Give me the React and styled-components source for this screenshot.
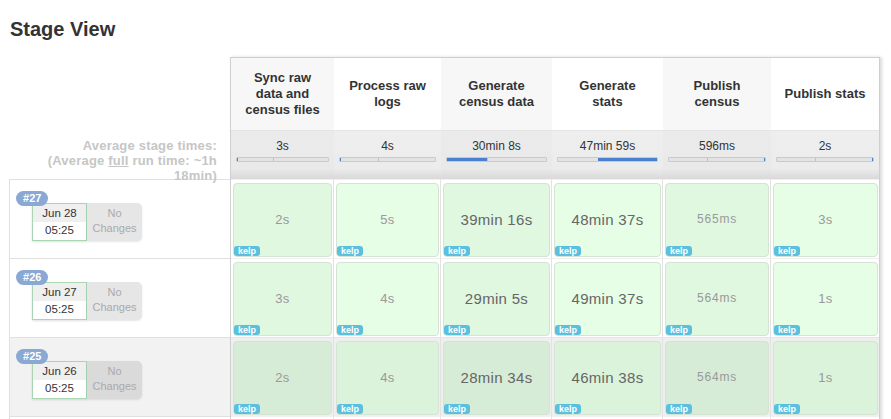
import React from 'react';
import styled, { createGlobalStyle } from 'styled-components';

const GlobalStyle = createGlobalStyle`
  html, body {
    margin: 0;
    padding: 0;
    background: #fff;
  }
  body {
    font-family: "Liberation Sans", Arial, sans-serif;
    color: #333;
  }
`;

const STAGES = [
  { name: 'Sync raw data and census files', avg: '3s', from: 0, to: 1 },
  { name: 'Process raw logs', avg: '4s', from: 0, to: 1 },
  { name: 'Generate census data', avg: '30min 8s', from: 0, to: 40 },
  { name: 'Generate stats', avg: '47min 59s', from: 40, to: 100 },
  { name: 'Publish census', avg: '596ms', from: 99, to: 100 },
  { name: 'Publish stats', avg: '2s', from: 99, to: 100 },
];

const BUILDS = [
  { id: 27, date: 'Jun 28', time: '05:25', times: ['2s', '5s', '39min 16s', '48min 37s', '565ms', '3s'] },
  { id: 26, date: 'Jun 27', time: '05:25', times: ['3s', '4s', '29min 5s', '49min 37s', '564ms', '1s'] },
  { id: 25, date: 'Jun 26', time: '05:25', times: ['2s', '4s', '28min 34s', '46min 38s', '564ms', '1s'], highlighted: true },
  { id: 24, date: 'Jun 25', time: '05:25', times: ['2s', '4s', '31min 2s', '47min 11s', '571ms', '2s'] },
];

const COLUMN_WIDTHS = '103px 107px 111px 111px 108px 108px';

const Page = styled.div`
  padding: 17px 0 0 9px;
`;

const Title = styled.h2`
  margin: 0 0 16px 1px;
  font-size: 20px;
  line-height: 24px;
  font-weight: bold;
  color: #333;
`;

const Board = styled.div`
  display: flex;
  align-items: flex-start;
`;

const LeftCol = styled.div`
  width: 221px;
  display: flex;
  flex-direction: column;
`;

const HeaderSpacer = styled.div`
  height: 73px;
`;

const AvgLabel = styled.div`
  height: 49px;
  box-sizing: border-box;
  padding: 8px 13px 0 20px;
  text-align: right;
  font-size: 13px;
  letter-spacing: 0.2px;
  line-height: 15px;
  font-weight: bold;
  color: #c6c6c6;
  position: relative;
  z-index: 1;

  u {
    text-decoration: underline;
  }
`;

const BuildRow = styled.div`
  height: 79px;
  box-sizing: border-box;
  border-top: 1px solid #e0e0e0;
  border-left: 1px solid #e0e0e0;
  background: ${p => (p.$highlighted ? '#f2f2f2' : '#fff')};
  padding: 8px 0 0 6px;
`;

const BuildBadge = styled.span`
  display: inline-block;
  position: relative;
  z-index: 1;
  height: 15px;
  line-height: 15px;
  padding: 0 7px;
  border-radius: 8px;
  background: #8aa8d4;
  color: #fff;
  font-size: 11px;
  font-weight: bold;
`;

const BuildInfo = styled.div`
  display: flex;
  margin: -3px 0 0 16px;
`;

const DateBox = styled.div`
  width: 55px;
  box-sizing: border-box;
  border: 1px solid #a9d5b5;
  background: #fff;
  box-shadow: 0 1px 2px rgba(0, 0, 0, 0.12);
  font-size: 11.5px;
  color: #333;
  text-align: center;
`;

const DatePart = styled.div`
  height: ${p => (p.$top ? 18 : 17)}px;
  line-height: ${p => (p.$top ? 18 : 17)}px;
  background: ${p => (p.$top ? '#efefef' : '#fff')};
`;

const NoChanges = styled.div`
  width: 55px;
  height: 38px;
  box-sizing: border-box;
  padding-top: 3px;
  background: ${p => (p.$highlighted ? '#dadada' : '#e6e6e6')};
  border-radius: 0 5px 5px 0;
  box-shadow: 0 1px 2px rgba(0, 0, 0, 0.1);
  color: #aaa;
  font-size: 11px;
  line-height: 15px;
  text-align: center;
`;

const StageTable = styled.div`
  display: grid;
  grid-template-columns: ${COLUMN_WIDTHS};
  grid-template-rows: 72px 49px repeat(${BUILDS.length}, 79px);
  border: 1px solid #cfcfcf;
  border-bottom: none;
  box-shadow: 2px 0 3px rgba(0, 0, 0, 0.14);
`;

const StageHead = styled.div`
  display: flex;
  align-items: center;
  justify-content: center;
  padding: 0 12px;
  text-align: center;
  background: ${p => (p.$odd ? '#f7f7f7' : '#fff')};
  font-size: 13px;
  line-height: 16px;
  font-weight: bold;
  color: #333;
`;

const AvgSlot = styled.div`
  padding: 8px 5px 0;
  background: linear-gradient(
    to bottom,
    ${p => (p.$odd ? '#ebebeb' : '#eeeeee')} 0,
    ${p => (p.$odd ? '#e9e9e9' : '#ececec')} 78%,
    #d9d9d9 100%
  );
  border-top: 1px solid #e4e4e4;
  text-align: center;
  font-size: 12px;
  line-height: 14px;
  color: #333;
`;

const Bar = styled.div`
  position: relative;
  height: 5px;
  margin-top: 4px;
  box-sizing: border-box;
  background: #e3e3e3;
  border: 1px solid #cacaca;
  border-radius: 1px;
`;

const BarTick = styled.span`
  position: absolute;
  top: 0;
  bottom: 0;
  left: 40%;
  width: 1px;
  background: #c2c2c2;
`;

const BarFill = styled.span`
  position: absolute;
  top: 0;
  bottom: 0;
  min-width: 1px;
  background: #4b7fd0;
`;

const BodySlot = styled.div`
  padding: 3px 1px 1px 2px;
  background: ${p => (p.$highlighted ? '#efefef' : '#fff')};
  border-right: ${p => (p.$last ? 'none' : '1px solid #e2e2e2')};
  border-top: 1px solid ${p => (p.$highlighted ? '#e6e6e6' : '#f0f0f0')};
`;

const StageCell = styled.div`
  height: 100%;
  box-sizing: border-box;
  display: flex;
  flex-direction: column;
  border: 1px solid #d4e3d4;
  border-radius: 4px;
  background: ${p => {
    if (p.$highlighted) return p.$odd ? '#d6ecd6' : '#dbf3db';
    return p.$odd ? '#e0f7e0' : '#e6fde6';
  }};
`;

const CellTime = styled.div`
  flex: 1;
  display: flex;
  align-items: center;
  justify-content: center;
  padding-top: 8px;
  font-size: ${p => (p.$kind === 'long' ? 15 : p.$kind === 'ms' ? 12 : 13)}px;
  letter-spacing: ${p => (p.$kind === 'ms' ? 0.8 : 0.3)}px;
  color: ${p => (p.$kind === 'long' ? '#666' : '#999')};
`;

const Kelp = styled.span`
  align-self: flex-start;
  height: 10px;
  line-height: 10px;
  padding: 0 4px;
  border-radius: 3px;
  background: #5bc0de;
  color: #fff;
  font-size: 9px;
  font-weight: bold;
`;

function timeKind(text) {
  if (text.includes('min')) return 'long';
  if (text.endsWith('ms')) return 'ms';
  return 'short';
}

function App() {
  return (
    <>
      <GlobalStyle />
      <Page>
        <Title>Stage View</Title>
        <Board>
          <LeftCol>
            <HeaderSpacer />
            <AvgLabel>
              Average stage times:
              <br />
              (Average <u>full</u> run time: ~1h 18min)
            </AvgLabel>
            {BUILDS.map(build => (
              <BuildRow key={build.id} $highlighted={build.highlighted}>
                <BuildBadge>#{build.id}</BuildBadge>
                <BuildInfo>
                  <DateBox>
                    <DatePart $top>{build.date}</DatePart>
                    <DatePart>{build.time}</DatePart>
                  </DateBox>
                  <NoChanges $highlighted={build.highlighted}>
                    No
                    <br />
                    Changes
                  </NoChanges>
                </BuildInfo>
              </BuildRow>
            ))}
          </LeftCol>
          <StageTable>
            {STAGES.map((stage, i) => (
              <StageHead key={'h' + i} $odd={i % 2 === 0}>
                {stage.name}
              </StageHead>
            ))}
            {STAGES.map((stage, i) => (
              <AvgSlot key={'a' + i} $odd={i % 2 === 0}>
                {stage.avg}
                <Bar>
                  <BarTick />
                  <BarFill style={{ left: stage.from + '%', width: stage.to - stage.from + '%' }} />
                </Bar>
              </AvgSlot>
            ))}
            {BUILDS.map(build =>
              build.times.map((t, i) => (
                <BodySlot
                  key={build.id + '-' + i}
                  $highlighted={build.highlighted}
                  $last={i === STAGES.length - 1}
                >
                  <StageCell $odd={i % 2 === 0} $highlighted={build.highlighted}>
                    <CellTime $kind={timeKind(t)}>{t}</CellTime>
                    <Kelp>kelp</Kelp>
                  </StageCell>
                </BodySlot>
              ))
            )}
          </StageTable>
        </Board>
      </Page>
    </>
  );
}

export default App;
